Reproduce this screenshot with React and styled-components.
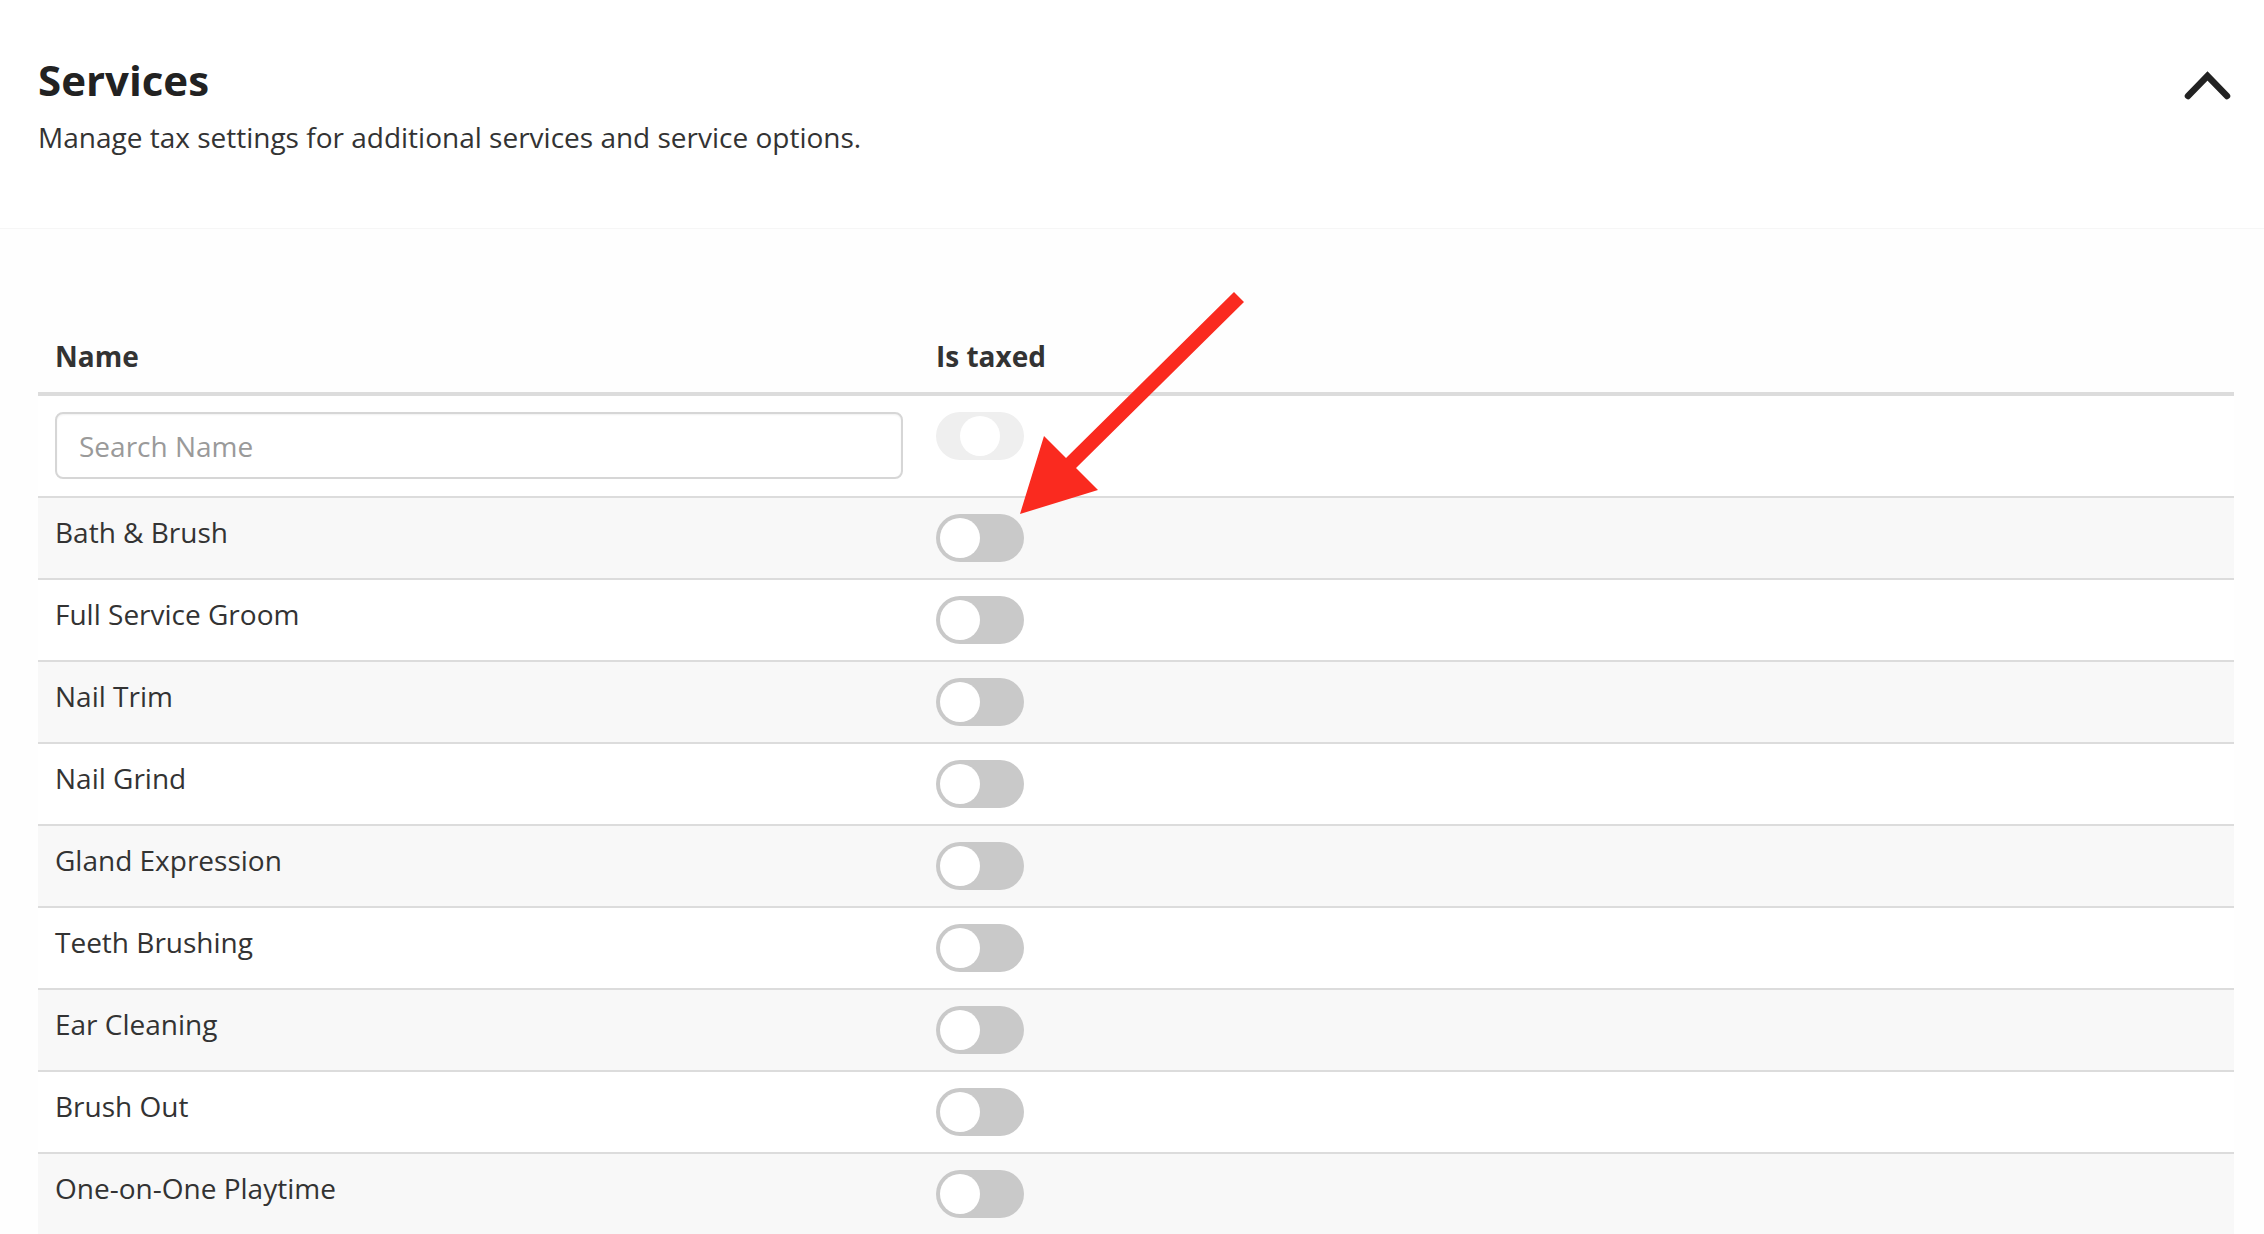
import React from "react";
import styled, { createGlobalStyle } from "styled-components";

const GlobalStyle = createGlobalStyle`
  body {
    margin: 0;
    background: #ffffff;
    font-family: "Open Sans", "Noto Sans", sans-serif;
    color: #333333;
  }
`;

const Page = styled.div`
  position: relative;
  width: 2264px;
  height: 1234px;
  overflow: hidden;
  background: #fefefe;
`;

const Header = styled.header`
  display: flex;
  justify-content: space-between;
  align-items: flex-start;
  padding: 54px 33px 71px 38px;
  background: #ffffff;
  border-bottom: 1px solid #f6f6f6;
`;

const TitleBlock = styled.div`
  display: flex;
  flex-direction: column;
  gap: 12px;
`;

const Title = styled.h2`
  margin: 0;
  font-size: 42px;
  line-height: 52px;
  font-weight: 700;
  color: #222222;
`;

const Subtitle = styled.p`
  margin: 0;
  font-size: 28px;
  line-height: 39px;
  font-weight: 400;
  color: #333333;
`;

const Collapse = styled.button`
  border: none;
  background: none;
  padding: 0;
  margin-top: 15px;
  cursor: pointer;
  line-height: 0;
`;

const Content = styled.section`
  padding: 91px 30px 0 38px;
`;

const Table = styled.div`
  display: flex;
  flex-direction: column;
`;

const Row = styled.div`
  display: grid;
  grid-template-columns: 881px 1fr;
  background: ${(props) => (props.striped ? "#f8f8f8" : "#ffffff")};
  border-top: ${(props) => (props.first ? "none" : "2px solid #dcdcdc")};
`;

const HeadRow = styled.div`
  display: grid;
  grid-template-columns: 881px 1fr;
  border-bottom: 4px solid #dcdcdc;
`;

const HeadCell = styled.div`
  padding: 17px 17px 17px;
  font-size: 28px;
  line-height: 38px;
  font-weight: 700;
  color: #333333;
`;

const Cell = styled.div`
  display: flex;
  align-items: flex-start;
  padding: ${(props) => (props.filter ? "16px 16px 17px 17px" : "16px 17px")};
  font-size: 28px;
  line-height: 37px;
  color: #333333;
`;

const SearchInput = styled.input`
  box-sizing: border-box;
  width: 100%;
  height: 67px;
  padding: 0 22px;
  border: 2px solid #d6d6d6;
  border-radius: 8px;
  box-shadow: inset 0 1px 2px rgba(0, 0, 0, 0.06);
  font-family: "Open Sans", "Noto Sans", sans-serif;
  font-size: 28px;
  color: #333333;
  outline: none;
  &::placeholder {
    color: #9a9a9a;
  }
`;

const Track = styled.span`
  display: flex;
  align-items: center;
  justify-content: ${(props) => (props.indeterminate ? "center" : "flex-start")};
  box-sizing: border-box;
  width: 88px;
  height: 48px;
  padding: 4px;
  border-radius: 24px;
  background: ${(props) => (props.indeterminate ? "#efefef" : "#c9c9c9")};
`;

const Knob = styled.span`
  width: 40px;
  height: 40px;
  border-radius: 50%;
  background: #ffffff;
`;

const Annotation = styled.svg`
  position: absolute;
  left: 1010px;
  top: 280px;
`;

const services = [
  "Bath & Brush",
  "Full Service Groom",
  "Nail Trim",
  "Nail Grind",
  "Gland Expression",
  "Teeth Brushing",
  "Ear Cleaning",
  "Brush Out",
  "One-on-One Playtime",
];

function Toggle({ indeterminate }) {
  return (
    <Track indeterminate={indeterminate}>
      <Knob />
    </Track>
  );
}

export default function App() {
  return (
    <Page>
      <GlobalStyle />
      <Header>
        <TitleBlock>
          <Title>Services</Title>
          <Subtitle>Manage tax settings for additional services and service options.</Subtitle>
        </TitleBlock>
        <Collapse aria-label="Collapse">
          <svg width="47" height="32" viewBox="0 0 47 32">
            <polyline
              points="4,27 23.5,7 43,27"
              fill="none"
              stroke="#222222"
              strokeWidth="6.5"
              strokeLinecap="round"
              strokeLinejoin="miter"
            />
          </svg>
        </Collapse>
      </Header>
      <Content>
        <Table>
          <HeadRow>
            <HeadCell>Name</HeadCell>
            <HeadCell>Is taxed</HeadCell>
          </HeadRow>
          <Row first>
            <Cell filter>
              <SearchInput placeholder="Search Name" />
            </Cell>
            <Cell filter>
              <Toggle indeterminate />
            </Cell>
          </Row>
          {services.map((name, i) => (
            <Row key={name} striped={i % 2 === 0}>
              <Cell>{name}</Cell>
              <Cell>
                <Toggle />
              </Cell>
            </Row>
          ))}
        </Table>
      </Content>
      <Annotation width="250" height="250" viewBox="1010 280 250 250">
        <polygon
          points="1244,302 1076,468 1098,490 1020,514 1044,436 1066,458 1234,292"
          fill="#fa2a1f"
        />
      </Annotation>
    </Page>
  );
}
